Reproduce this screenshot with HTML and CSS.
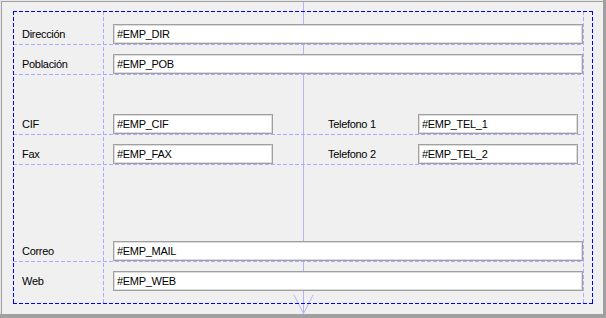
FILE: index.html
```html
<!DOCTYPE html>
<html lang="es">
<head>
    <meta charset="UTF-8">
    <title>Datos empresa</title>
    <link rel="stylesheet" href="styles.css">
</head>
<body>
    <div class="frame">
        <div class="form">
            <!-- designer guides: layout box, cell lines, tab arrow -->
            <svg class="guides" width="606" height="318" viewBox="0 0 606 318" shape-rendering="crispEdges">
                <g stroke="#b4b4f4" fill="none">
                    <line x1="303.5" y1="2" x2="303.5" y2="314"/>
                </g>
                <g stroke="#b4b4f4" fill="none" shape-rendering="auto">
                    <line x1="294" y1="295" x2="303.5" y2="313.5"/>
                    <line x1="313" y1="295" x2="303.5" y2="313.5"/>
                </g>
                <g stroke="#aaaaff" fill="none" stroke-dasharray="4 2">
                    <line x1="103.5" y1="11" x2="103.5" y2="304"/>
                    <line x1="583.5" y1="11" x2="583.5" y2="304"/>
                    <line x1="13" y1="44.5" x2="584" y2="44.5"/>
                    <line x1="13" y1="74.5" x2="584" y2="74.5"/>
                    <line x1="13" y1="134.5" x2="584" y2="134.5"/>
                    <line x1="13" y1="164.5" x2="584" y2="164.5"/>
                    <line x1="13" y1="261.5" x2="584" y2="261.5"/>
                </g>
                <g stroke="#0000ff" fill="none" stroke-dasharray="4 2">
                    <line x1="13" y1="11.5" x2="593" y2="11.5"/>
                    <line x1="13" y1="303.5" x2="593" y2="303.5"/>
                    <line x1="13.5" y1="11" x2="13.5" y2="304"/>
                    <line x1="592.5" y1="11" x2="592.5" y2="304"/>
                </g>
            </svg>

            <div class="layout">
                <label class="lbl">Dirección</label>
                <input class="field wide" value="#EMP_DIR" readonly>

                <label class="lbl">Población</label>
                <input class="field wide" value="#EMP_POB" readonly>

                <div class="spacer"></div>

                <label class="lbl">CIF</label>
                <input class="field short" value="#EMP_CIF" readonly>
                <label class="lbl lbl-right">Telefono 1</label>
                <input class="field short right" value="#EMP_TEL_1" readonly>

                <label class="lbl">Fax</label>
                <input class="field short" value="#EMP_FAX" readonly>
                <label class="lbl lbl-right">Telefono 2</label>
                <input class="field short right" value="#EMP_TEL_2" readonly>

                <div class="spacer"></div>

                <label class="lbl">Correo</label>
                <input class="field wide" value="#EMP_MAIL" readonly>

                <label class="lbl">Web</label>
                <input class="field wide" value="#EMP_WEB" readonly>
            </div>
        </div>
    </div>
</body>
</html>
```

FILE: styles.css
```css
/* window */
body {
    margin: 0;
    width: 606px;
    height: 318px;
    background: #a0a0a0;
    position: relative;
    overflow: hidden;
    font-family: "Liberation Sans", Arial, sans-serif;
    font-size: 11px;
    color: #000;
}

.frame {
    width: 603px;
    height: 314px;
    box-sizing: border-box;
    border-top: 1px solid #e6e6e6;
    border-left: 1px solid #e6e6e6;
    background: #f0f0f0;
}

.form {
    height: 100%;
    box-sizing: border-box;
    border-top: 1px solid #a0a0a0;
    border-left: 1px solid #a0a0a0;
    padding: 9px 0 0 11px;
}

.guides {
    position: absolute;
    left: 0;
    top: 0;
}

/* grid layout */
.layout {
    position: relative;
    width: 579px;
    display: grid;
    grid-template-columns: 90px 200px 110px 179px;
    grid-template-rows: 33px 30px 30px 30px 30px 67px 30px 30px;
}

.spacer {
    grid-column: 1 / -1;
}

.lbl {
    align-self: end;
    height: 20px;
    line-height: 20px;
    padding-left: 9px;
    letter-spacing: -0.3px;
    white-space: nowrap;
}

.lbl-right {
    padding-left: 25px;
}

.field {
    align-self: end;
    height: 20px;
    box-sizing: border-box;
    margin: 0 0 0 10px;
    padding: 0 3px;
    border: 1px solid #a0a0a0;
    box-shadow: inset 0 0 0 1px #dcdcdc;
    background: #fff;
    font-family: "Liberation Sans", Arial, sans-serif;
    font-size: 11px;
    letter-spacing: -0.3px;
    color: #000;
    outline: none;
}

.wide {
    grid-column: 2 / -1;
    margin-right: 9px;
}

.short {
    width: 160px;
}

.field.right {
    margin-left: 5px;
}
```
